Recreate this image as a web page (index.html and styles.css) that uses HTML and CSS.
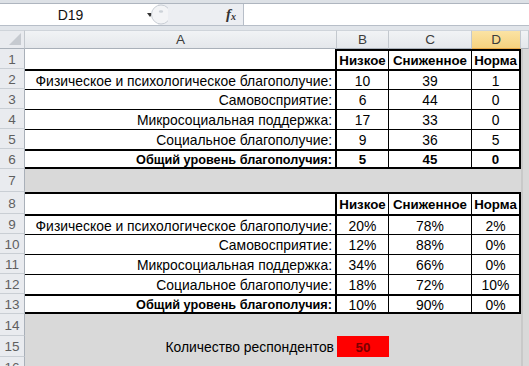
FILE: index.html
```html
<!DOCTYPE html>
<html lang="ru">
<head>
<meta charset="utf-8">
<title>Excel</title>
<link rel="stylesheet" href="styles.css">
</head>
<body>
<div class="app">
  <div class="topstrip"></div>
  <div class="fbar">
    <div class="namebox"><span class="name">D19</span><span class="arrow"></span></div>
    <div class="fxzone">
      <svg class="grip" width="18" height="21" viewBox="0 0 18 21"><circle cx="11" cy="10.5" r="9.5" fill="#f3f4f6" stroke="#c9ced5"/><ellipse cx="11" cy="7.5" rx="2.2" ry="1.3" fill="#cdd2d8"/></svg>
      <span class="fx"><i>f</i><sub>x</sub></span>
    </div>
    <div class="finput"></div>
  </div>
  <div class="gap"></div>
  <div class="sheet">
    <!-- header -->
    <div class="corner"><svg width="12" height="12" viewBox="0 0 12 12"><polygon points="12,0 12,12 0,12" fill="#c6cad0"/></svg></div>
    <div class="ch">A</div>
    <div class="ch">B</div>
    <div class="ch">C</div>
    <div class="ch sel">D</div>
    <div class="ch"></div>

    <!-- row 1 -->
    <div class="rh">1</div>
    <div class="c w rT"></div>
    <div class="c w m b tT rt">Низкое</div>
    <div class="c w m b tT rt">Сниженное</div>
    <div class="c w m b tT rT">Норма</div>
    <div class="c e"></div>

    <!-- row 2 -->
    <div class="rh">2</div>
    <div class="c w r tT rT">Физическое и психологическое благополучие:</div>
    <div class="c w m tT rt">10</div>
    <div class="c w m tT rt">39</div>
    <div class="c w m tT rT">1</div>
    <div class="c e"></div>

    <!-- row 3 -->
    <div class="rh">3</div>
    <div class="c w r tt rT">Самовосприятие:</div>
    <div class="c w m tt rt">6</div>
    <div class="c w m tt rt">44</div>
    <div class="c w m tt rT">0</div>
    <div class="c e"></div>

    <!-- row 4 -->
    <div class="rh">4</div>
    <div class="c w r tt rT">Микросоциальная поддержка:</div>
    <div class="c w m tt rt">17</div>
    <div class="c w m tt rt">33</div>
    <div class="c w m tt rT">0</div>
    <div class="c e"></div>

    <!-- row 5 -->
    <div class="rh">5</div>
    <div class="c w r tt rT">Социальное благополучие:</div>
    <div class="c w m tt rt">9</div>
    <div class="c w m tt rt">36</div>
    <div class="c w m tt rT">5</div>
    <div class="c e"></div>

    <!-- row 6 -->
    <div class="rh">6</div>
    <div class="c w r b tT bT rT">Общий уровень благополучия:</div>
    <div class="c w m b tT bT rt">5</div>
    <div class="c w m b tT bT rt">45</div>
    <div class="c w m b tT bT rT">0</div>
    <div class="c e"></div>

    <!-- row 7 -->
    <div class="rh">7</div>
    <div class="c g"></div>
    <div class="c g"></div>
    <div class="c g"></div>
    <div class="c g"></div>
    <div class="c e"></div>

    <!-- row 8 -->
    <div class="rh">8</div>
    <div class="c w tT rT"></div>
    <div class="c w m b tT rt">Низкое</div>
    <div class="c w m b tT rt">Сниженное</div>
    <div class="c w m b tT rT">Норма</div>
    <div class="c e"></div>

    <!-- row 9 -->
    <div class="rh">9</div>
    <div class="c w r tT rT">Физическое и психологическое благополучие:</div>
    <div class="c w m tT rt">20%</div>
    <div class="c w m tT rt">78%</div>
    <div class="c w m tT rT">2%</div>
    <div class="c e"></div>

    <!-- row 10 -->
    <div class="rh">10</div>
    <div class="c w r tt rT">Самовосприятие:</div>
    <div class="c w m tt rt">12%</div>
    <div class="c w m tt rt">88%</div>
    <div class="c w m tt rT">0%</div>
    <div class="c e"></div>

    <!-- row 11 -->
    <div class="rh">11</div>
    <div class="c w r tt rT">Микросоциальная поддержка:</div>
    <div class="c w m tt rt">34%</div>
    <div class="c w m tt rt">66%</div>
    <div class="c w m tt rT">0%</div>
    <div class="c e"></div>

    <!-- row 12 -->
    <div class="rh">12</div>
    <div class="c w r tt rT">Социальное благополучие:</div>
    <div class="c w m tt rt">18%</div>
    <div class="c w m tt rt">72%</div>
    <div class="c w m tt rT">10%</div>
    <div class="c e"></div>

    <!-- row 13 -->
    <div class="rh">13</div>
    <div class="c w r b tT bT rT">Общий уровень благополучия:</div>
    <div class="c w m tT bT rt">10%</div>
    <div class="c w m tT bT rt">90%</div>
    <div class="c w m tT bT rT">0%</div>
    <div class="c e"></div>

    <!-- row 14 -->
    <div class="rh">14</div>
    <div class="c g"></div>
    <div class="c g"></div>
    <div class="c g"></div>
    <div class="c g"></div>
    <div class="c e"></div>

    <!-- row 15 -->
    <div class="rh">15</div>
    <div class="c g r">Количество респондентов</div>
    <div class="c red m b">50</div>
    <div class="c g"></div>
    <div class="c g"></div>
    <div class="c e"></div>

    <!-- row 16 -->
    <div class="rh">16</div>
    <div class="c g"></div>
    <div class="c g"></div>
    <div class="c g"></div>
    <div class="c g"></div>
    <div class="c e"></div>
  </div>
</div>
</body>
</html>
```
FILE: styles.css
```css
* { box-sizing: border-box; }
html, body { margin: 0; padding: 0; }
body {
  width: 529px;
  height: 366px;
  overflow: hidden;
  background: #e3e7ec;
  font-family: "Liberation Sans", Arial, sans-serif;
}
.app { display: flex; flex-direction: column; width: 529px; }

.topstrip {
  height: 4px;
  background: #dde1e6;
  border-bottom: 1px solid #aeb5bf;
}
.fbar {
  display: flex;
  height: 22px;
  background: #ffffff;
  border-bottom: 1px solid #b7bec8;
}
.namebox {
  width: 158px;
  display: flex;
  align-items: center;
  background: #ffffff;
}
.name {
  flex: 1;
  text-align: center;
  font-size: 14px;
  color: #111;
  padding-right: 6px;
}
.arrow {
  width: 0; height: 0;
  border-left: 3.5px solid transparent;
  border-right: 3.5px solid transparent;
  border-top: 4px solid #333;
  margin-right: 5px;
  margin-top: 1px;
}
.fxzone {
  width: 86px;
  display: flex;
  align-items: center;
  justify-content: space-between;
  background: #eceef2;
  border-right: 1px solid #b7bec8;
  padding-right: 7px;
}
.grip { display: block; margin-left: -8px; }
.fx {
  font-family: "Liberation Serif", "Times New Roman", serif;
  font-size: 15px;
  color: #333;
  font-weight: bold;
}
.fx i { font-style: italic; }
.fx sub { font-size: 10px; font-style: italic; vertical-align: -1px; }
.finput { flex: 1; background: #ffffff; }

.gap { height: 4px; background: #e1e5ea; }

.sheet {
  display: grid;
  grid-template-columns: 25px 312px 52px 83px 49px 8px;
  grid-template-rows: 19px repeat(6, 20px) 23px 22px repeat(5, 20px) 22px 21px 20px;
  background: #d9d9d9;
}

.corner {
  background: #e9ebef;
  border-right: 1px solid #c3c8ce;
  border-bottom: 1px solid #a9b0b9;
  border-top: 1px solid #cfd4da;
  display: flex;
  align-items: flex-end;
  justify-content: flex-end;
  padding: 0 3px 3px 0;
}
.corner svg { display: block; }

.ch {
  background: linear-gradient(#f1f3f5, #e4e7eb);
  border-right: 1px solid #c3c8ce;
  border-bottom: 1px solid #a9b0b9;
  border-top: 1px solid #cfd4da;
  font-size: 13.5px;
  color: #3c3c3c;
  display: flex;
  align-items: center;
  justify-content: center;
}
.ch.sel {
  background: linear-gradient(#fbe3a4, #f6d27f);
  border-bottom: 1px solid #e9a949;
}

.rh {
  background: #e9ebef;
  border-right: 1px solid #a9b0b9;
  border-bottom: 1px solid #c9ced4;
  font-size: 13.5px;
  color: #5f5f5f;
  display: flex;
  align-items: center;
  justify-content: center;
  padding-top: 1px;
}

.c {
  display: flex;
  align-items: center;
  font-size: 13.9px;
  color: #000;
  white-space: nowrap;
  overflow: hidden;
  padding-top: 1px;
}
.w { background: #ffffff; }
.g { background: #d9d9d9; }
.e { background: #d9d9d9; border-left: 2px solid #c9c9c9; }
.red { background: #ff0000; color: #7a0000; }
.r { justify-content: flex-end; padding-right: 3px; }
.m { justify-content: center; }
.b { font-weight: bold; font-size: 13.3px; }
.r.b { font-size: 12.7px; }

.tT { border-top: 2px solid #000; }
.tt { border-top: 1px solid #000; }
.bT { border-bottom: 2px solid #000; }
.rT { border-right: 2px solid #000; }
.rt { border-right: 1px solid #000; }
```
